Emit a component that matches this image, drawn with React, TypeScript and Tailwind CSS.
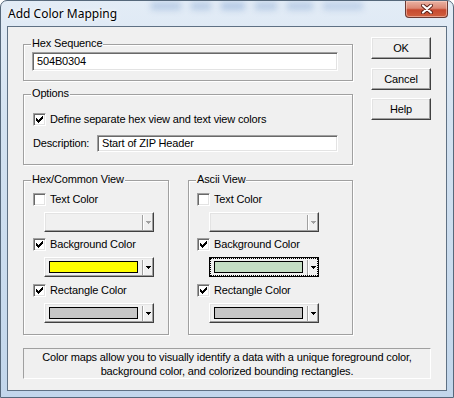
import React from "react";

const raised =
  "border border-t-white border-l-white border-b-[#404040] border-r-[#404040] shadow-[inset_-1px_-1px_0_#a0a0a0,inset_1px_1px_0_#e3e3e3]";
const sunken =
  "border border-t-[#a0a0a0] border-l-[#a0a0a0] border-b-white border-r-white shadow-[inset_1px_1px_0_#696969,inset_-1px_-1px_0_#e3e3e3]";

function Check({ checked }: { checked: boolean }) {
  return (
    <span className={`w-[13px] h-[13px] bg-white flex items-center justify-center shrink-0 ${sunken}`}>
      {checked && (
        <svg width="7" height="7" viewBox="0 0 7 7" shapeRendering="crispEdges">
          <path d="M0 2h1v1h1v1h1v-1h1v-1h1v-1h1v-1h1v3h-1v1h-1v1h-1v1h-1v1h-1v-1h-1v-1h-1v-1h-1z" fill="#000" />
        </svg>
      )}
    </span>
  );
}

function Arrow({ gray }: { gray?: boolean }) {
  return (
    <svg width="5" height="3" viewBox="0 0 5 3" shapeRendering="crispEdges">
      <path d="M0 0h5v1h-1v1h-1v1h-1v-1h-1v-1h-1z" fill={gray ? "#a0a0a0" : "#000"} />
    </svg>
  );
}

function ColorDrop({ color, disabled, focused }: { color?: string; disabled?: boolean; focused?: boolean }) {
  const inner = (
    <>
      <span className={`w-[89px] h-[12px] shrink-0 ${disabled ? "" : "border border-black"}`} style={{ background: disabled ? "transparent" : color }} />
      <span className="ml-[4px] w-[2px] h-[15px] border-l border-l-[#a0a0a0] border-r border-r-white shrink-0" />
      <span className="ml-[2px] flex items-center">
        <Arrow gray={disabled} />
      </span>
    </>
  );
  if (focused) {
    return (
      <div className="w-[110px] h-[20px] border border-black bg-[#f0f0f0] flex">
        <div className="flex-1 border border-dotted border-black flex items-center pl-[3px]">{inner}</div>
      </div>
    );
  }
  return <div className={`w-[110px] h-[20px] bg-[#f0f0f0] flex items-center pl-[4px] ${raised}`}>{inner}</div>;
}

function Group({ title, className, children }: { title: string; className?: string; children?: React.ReactNode }) {
  return (
    <div className={`relative border border-[#a0a0a0] shadow-[inset_1px_1px_0_#fff,1px_1px_0_#fff] ${className ?? ""}`}>
      <span className="absolute left-[7px] -top-[8px] bg-[#f0f0f0] px-[1px] leading-[13px] text-[11px]">{title}</span>
      {children}
    </div>
  );
}

function CheckRow({ checked, label }: { checked: boolean; label: string }) {
  return (
    <div className="flex items-center h-[13px] gap-[4px]">
      <Check checked={checked} />
      <span className="leading-[13px] text-[11px]">{label}</span>
    </div>
  );
}

function Btn({ label, className }: { label: string; className?: string }) {
  return (
    <div className={`w-[60px] h-[22px] bg-[#f0f0f0] flex items-center justify-center text-[11px] ${raised} ${className ?? ""}`}>
      {label}
    </div>
  );
}

function ViewGroup({ title, width, pl, bgFocused, bgColor }: { title: string; width: string; pl: string; bgFocused?: boolean; bgColor: string }) {
  return (
    <Group title={title} className={`${width} h-[155px]`}>
      <div className="flex flex-col pt-[12px] gap-[6px]">
        <div className={pl}>
          <CheckRow checked={false} label="Text Color" />
        </div>
        <div className="pl-[20px]">
          <ColorDrop disabled />
        </div>
        <div className={pl}>
          <CheckRow checked label="Background Color" />
        </div>
        <div className="pl-[20px]">
          <ColorDrop color={bgColor} focused={bgFocused} />
        </div>
        <div className={`${pl} mt-[1px]`}>
          <CheckRow checked label="Rectangle Color" />
        </div>
        <div className="pl-[20px]">
          <ColorDrop color="#c6c6c6" />
        </div>
      </div>
    </Group>
  );
}

export default function App() {
  return (
    <div className="w-[454px] h-[398px] relative overflow-hidden rounded-t-[7px] border border-[#56687b] bg-[linear-gradient(180deg,#e3ecf6_0%,#d3e2f1_30%,#c2d6eb_100%)] flex flex-col text-black [font-family:'Liberation_Sans',Arial,sans-serif]">
      <div className="h-[25px] shrink-0 flex items-start justify-between relative">
        <div className="absolute left-[150px] top-[1px] flex gap-[10px] opacity-40 blur-[3px]">
          <span className="w-[30px] h-[8px] bg-[#7c9fd0]" />
          <span className="w-[20px] h-[8px] bg-[#7c9fd0]" />
          <span className="w-[24px] h-[8px] bg-[#6d94cc]" />
          <span className="w-[22px] h-[8px] bg-[#7c9fd0]" />
          <span className="w-[26px] h-[8px] bg-[#7c9fd0]" />
          <span className="w-[40px] h-[8px] bg-[#8aa9d6]" />
        </div>
        <div className="relative pl-[7px] pt-[5px] text-[12px] leading-[16px] [font-family:'Noto_Sans',sans-serif] [text-shadow:0_0_6px_#fff,0_0_3px_#fff]">
          Add Color Mapping
        </div>
        <div className="relative mr-[5px] w-[43px] h-[17px] rounded-b-[4px] border border-t-0 border-[#6b3a33] bg-[linear-gradient(180deg,#eab3a4_0%,#dc8874_45%,#c74a30_55%,#d0603f_100%)] flex items-center justify-center shadow-[inset_0_0_0_1px_rgba(255,220,210,0.5)]">
          <svg width="12" height="10" viewBox="0 0 12 10">
            <path d="M2 1.5 L10 8.5 M10 1.5 L2 8.5" stroke="#5a2018" strokeWidth="4" strokeLinecap="round" />
            <path d="M2 1.5 L10 8.5 M10 1.5 L2 8.5" stroke="#fff" strokeWidth="2.2" strokeLinecap="round" />
          </svg>
        </div>
      </div>

      <div className="mx-[6px] mb-[6px] flex-1 border border-[#5f7184] bg-[#f0f0f0] flex flex-col text-[11px] tracking-[-0.15px]">
        <div className="flex items-start pl-[15px]">
          <div className="w-[330px] pt-[17px] flex flex-col">
            <Group title="Hex Sequence" className="h-[37px]">
              <div className="pl-[8px] pt-[7px]">
                <div className={`w-[306px] h-[19px] bg-white flex items-center pl-[4px] ${sunken}`}>504B0304</div>
              </div>
            </Group>
            <Group title="Options" className="h-[71px] mt-[13px]">
              <div className="pl-[9px] pt-[18px]">
                <CheckRow checked label="Define separate hex view and text view colors" />
              </div>
              <div className="flex items-center pl-[9px] mt-[9px]">
                <span className="w-[64px]">Description:</span>
                <div className={`w-[241px] h-[17px] bg-white flex items-center pl-[4px] ${sunken}`}>Start of ZIP Header</div>
              </div>
            </Group>
            <div className="flex gap-[19px] mt-[15px]">
              <ViewGroup title="Hex/Common View" width="w-[146px]" pl="pl-[9px]" bgColor="#ffff00" />
              <ViewGroup title="Ascii View" width="w-[165px]" pl="pl-[8px]" bgColor="#c4dec4" bgFocused />
            </div>
          </div>
          <div className="ml-[18px] pt-[10px] flex flex-col">
            <Btn label="OK" />
            <Btn label="Cancel" className="mt-[9px]" />
            <Btn label="Help" className="mt-[8px]" />
          </div>
        </div>
        <div className={`ml-[15px] mt-[13px] w-[408px] h-[31px] bg-[#f0f0f0] flex flex-col items-center justify-center leading-[14px] ${sunken} shadow-none`}>
          <span>Color maps allow you to visually identify a data with a unique foreground color,</span>
          <span>background color, and colorized bounding rectangles.</span>
        </div>
      </div>
    </div>
  );
}
